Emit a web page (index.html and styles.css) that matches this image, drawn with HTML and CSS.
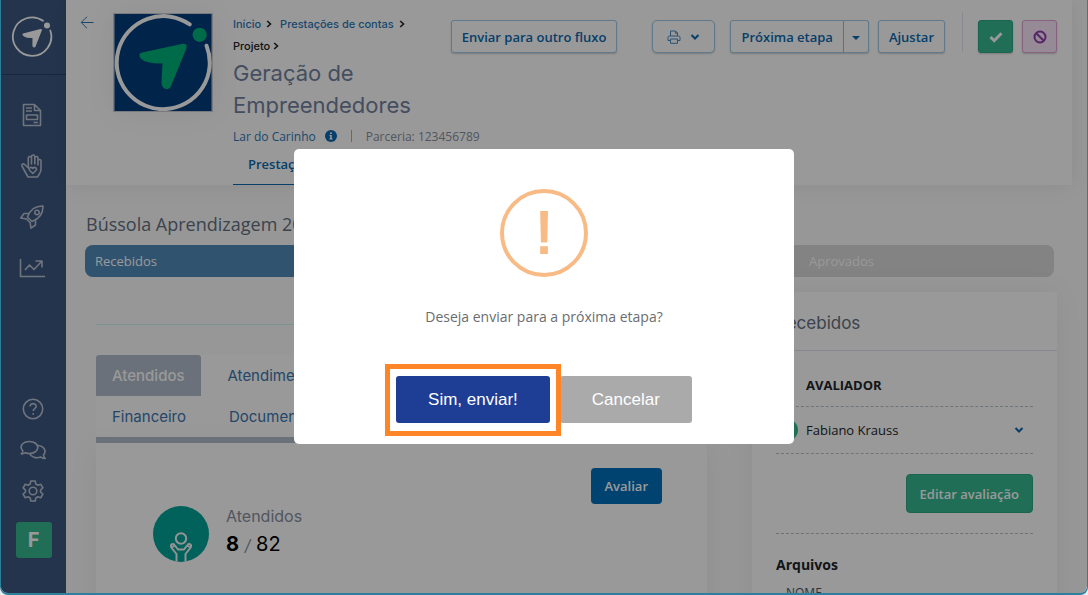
FILE: index.html
```
<!DOCTYPE html>
<html lang="pt-br">
<head>
	<meta charset="utf-8">
	<meta name="viewport" content="width=device-width, initial-scale=1">
	<title>Prestações de contas</title>
	<link rel="stylesheet" href="styles.css">
</head>
<body>
<div class="window">

	<aside class="sidebar">
		<a href="#" class="brand" aria-label="Início">
			<svg width="42" height="42" viewBox="0 0 42 42">
				<path d="M32 4.800A19.200 19.200 0 1 0 39.300 14.500" fill="none" stroke="#fff" stroke-width="1.800" stroke-linecap="round"/>
				<circle cx="36" cy="9.500" r="3" fill="#fff"/>
				<path d="M12 17.500 29.500 13Q31.500 12.600 30.800 14.500L24.500 30.500Q23.800 32 22.400 31.300Q21.300 30.700 21.400 29L21.500 22Q16 22.300 13 20.500Q10.500 18.500 12 17.500Z" fill="#fff"/>
			</svg>
		</a>
		<nav class="menu">
			<a href="#" aria-label="Documentos">
				<svg width="24" height="24" viewBox="0 0 24 24"><path d="M3.500 1.500h11l6 6v15h-17zM14.500 1.500v6h6M6 5h6M6 8h6M6.500 12h11v4.500h-11zM13.500 19.500h4.500"/></svg>
			</a>
			<a href="#" aria-label="Doações">
				<svg width="24" height="24" viewBox="0 0 24 24"><path d="M8 23h9.500c1-2 3.500-4 3.500-8V7c0-2-3-2-3 0v4-7c0-2-3.200-2-3.200 0v6V2.500c0-2-3.300-2-3.300 0V10 4c0-2-3.200-2-3.200 0v10l-3.600-3.500C3 9 1 10.500 2.200 12.500z"/><path d="M12.800 19.500l-3.300-3.200c-1.500-2.300 1.500-4 3.300-1.800 1.800-2.200 4.800-.5 3.300 1.800z"/></svg>
			</a>
			<a href="#" aria-label="Projetos">
				<svg width="24" height="24" viewBox="0 0 24 24"><path d="M7.500 12C10 5 15 .8 23 1c.2 8-4 13-11 15.500zM9 8.500H4L.8 13l5.700 1M15.500 15v5L11 23.200l-1-5.700M6 13.500l4.500 4.500"/><circle cx="17" cy="7.500" r="2.200"/></svg>
			</a>
			<a href="#" aria-label="Relatórios">
				<svg width="26" height="24" viewBox="0 0 26 24"><path d="M1.500 3v17.500H26M6 14l4.500-5 4.500 4.500L22.500 5.500M16.500 5h6.500v6.500"/></svg>
			</a>
		</nav>
		<div class="menu menu-bottom">
			<a href="#" aria-label="Ajuda">
				<svg width="24" height="24" viewBox="0 0 24 24"><circle cx="12" cy="12" r="9.700"/><path d="M9 9.500c0-4 6.300-3.700 6.200-.2 0 2.300-3 2.300-3 4.700"/><path d="M12.200 16v1.800"/></svg>
			</a>
			<a href="#" aria-label="Mensagens">
				<svg width="26" height="24" viewBox="0 0 26 24"><path d="M9.500 3.500c5 0 8.300 2.700 8.300 6s-3.600 6-8.300 6c-1.500 0-2.800-.2-4-.8-1.200.8-2.700 1.300-4.200 1.300 1-1 1.500-2 1.600-3C-1.500 8.500 3 3.500 9.500 3.500z"/><path d="M18 7.500c6.500.5 8.800 6 5.400 9.500.2 1.300.8 2.300 1.800 3.500-1.700 0-3.200-.5-4.400-1.400-4.800 1.600-9.800 0-11-3.400"/></svg>
			</a>
			<a href="#" aria-label="Configurações">
				<svg width="24" height="24" viewBox="0 0 24 24"><path d="M9.800 2h4.400l.6 3 2.100 1.200 2.800-1 2.200 3.800-2.300 1.900v2.200l2.300 1.900-2.200 3.800-2.800-1-2.100 1.200-.6 3H9.800l-.6-3-2.100-1.200-2.800 1-2.200-3.800 2.300-1.900v-2.200L2.100 9l2.200-3.800 2.800 1L9.200 5z"/><circle cx="12" cy="12" r="3.800"/></svg>
			</a>
			<a href="#" class="user">F</a>
		</div>
	</aside>

	<main class="page">

		<header class="header">
			<a href="#" class="back" aria-label="Voltar">
				<svg width="14" height="14" viewBox="0 0 14 14"><path d="M13.500 7.500H1.500M7 1.700 1.200 7.500 7 13.300" fill="none" stroke="#2b79b8"/></svg>
			</a>
			<div class="picture">
				<svg viewBox="0 0 98 98">
					<rect width="98" height="98" fill="#003d7c"/>
					<path d="M76 10.500A47 47 0 1 0 93 32" fill="none" stroke="#fff" stroke-width="4" stroke-linecap="round"/>
					<circle cx="86" cy="21" r="7.200" fill="#00b27a"/>
					<path d="M28 39 69 30Q74 29.500 72.500 35L57 73Q55.500 77 51 75.500Q47.500 74 47.500 69L48.500 50Q31 50 26.500 45Q23 40 28 39Z" fill="#00b27a"/>
				</svg>
			</div>
			<div class="header-body">
				<div class="header-top">
					<div class="heading">
						<nav class="breadcrumb">
							<a href="#">Início</a><svg class="chev" width="6" height="8" viewBox="0 0 6 8"><path d="M1.200 1 4.500 4 1.200 7"/></svg>
							<a href="#">Prestações de contas</a><svg class="chev" width="6" height="8" viewBox="0 0 6 8"><path d="M1.200 1 4.500 4 1.200 7"/></svg>
							<span>Projeto</span><svg class="chev near" width="6" height="8" viewBox="0 0 6 8"><path d="M1.200 1 4.500 4 1.200 7"/></svg>
						</nav>
						<h1>Geração de Empreendedores</h1>
					</div>
					<div class="actions">
						<button type="button" class="btn flow">Enviar para outro fluxo</button>
						<button type="button" class="btn print" aria-label="Imprimir">
							<svg width="14" height="14" viewBox="0 0 14 14"><path d="M3.500 6V1h5l2 2v3M8.500 1v2.200h2M3.200 10.500H1V7.500Q1 6 2.500 6h9Q13 6 13 7.500v3h-2.200M3.500 9h7v4.300h-7z" fill="none" stroke="#4a8abf"/></svg>
							<svg width="10" height="8" viewBox="0 0 10 8"><path d="M1.500 2 5 5.500 8.500 2" fill="none" stroke="#0b69b0" stroke-width="2"/></svg>
						</button>
						<div class="split">
							<button type="button" class="btn">Próxima etapa</button>
							<button type="button" class="btn caret" aria-label="Mais etapas"><svg width="8" height="4" viewBox="0 0 8 4"><path d="M0 0h8L4 4z" fill="#0b69b0"/></svg></button>
						</div>
						<button type="button" class="btn">Ajustar</button>
						<div class="status">
							<button type="button" class="btn approve" aria-label="Aprovar"><svg width="14" height="12" viewBox="0 0 14 12"><path d="M1.500 6 5.200 9.700 12.500 2.200" fill="none" stroke="#fff" stroke-width="3"/></svg></button>
							<button type="button" class="btn refuse" aria-label="Reprovar"><svg width="14" height="14" viewBox="0 0 14 14"><circle cx="7" cy="7" r="5.500"/><path d="M3 3l8 8"/></svg></button>
						</div>
					</div>
				</div>
				<div class="meta">
					<a href="#">Lar do Carinho</a>
					<svg width="12" height="12" viewBox="0 0 12 12"><circle cx="6" cy="6" r="6" fill="#0b69b0"/><path d="M5 2.500h2v1.600H5zM4.500 5h2.300v3.300h.7v1.200h-3V8.300h.7V6.200h-.7z" fill="#fff"/></svg>
					<span class="bar"></span>
					<span>Parceria: 123456789</span>
				</div>
				<nav class="tabs"><a href="#">Prestação de contas</a></nav>
			</div>
		</header>

		<h2 class="title">Bússola Aprendizagem 2022</h2>

		<div class="steps">
			<div class="current">Recebidos</div>
			<div></div>
			<div></div>
			<div>Aprovados</div>
		</div>

		<div class="columns">
			<section class="report">
				<nav class="subtabs">
					<a href="#" class="active">Atendidos</a>
					<a href="#">Atendimentos</a>
				</nav>
				<nav class="subtabs">
					<a href="#">Financeiro</a>
					<a href="#">Documentos</a>
				</nav>
				<div class="report-body">
					<button type="button" class="primary">Avaliar</button>
					<div class="stat">
						<svg width="56" height="56" viewBox="0 0 56 56">
							<circle cx="28" cy="28" r="28" fill="#00a396"/>
							<g fill="none" stroke="#f4f6f6" stroke-width="2" stroke-linejoin="round">
								<circle cx="28" cy="32.500" r="5.200"/>
								<path d="M23.500 55.500V48L18.300 41.500Q17.300 39 19 38.200Q20.500 37.600 21.500 39L25 43.500H31L34.500 39Q35.500 37.600 37 38.200Q38.700 39 37.700 41.500L32.500 48V55.500M18.500 41.500 22 39.500M37.500 41.500 34 39.500"/>
							</g>
						</svg>
						<div>
							<div class="label">Atendidos</div>
							<div class="value"><b>8</b> <i>/</i> 82</div>
						</div>
					</div>
				</div>
			</section>

			<section class="review">
				<h3>Recebidos</h3>
				<div class="review-body">
					<div class="th">AVALIADOR</div>
					<div class="evaluator">
						<span class="avatar"></span>
						<span class="name">Fabiano Krauss</span>
						<svg width="10" height="8" viewBox="0 0 10 8"><path d="M1.500 2 5 5.500 8.500 2" fill="none" stroke="#0b69b0" stroke-width="2"/></svg>
					</div>
					<div class="edit"><button type="button" class="success">Editar avaliação</button></div>
					<h4>Arquivos</h4>
					<div class="file-head">NOME</div>
				</div>
			</section>
		</div>
	</main>
</div>

<div class="overlay">
	<div class="modal" role="dialog" aria-modal="true" aria-labelledby="question">
		<div class="warning">!</div>
		<p id="question">Deseja enviar para a próxima etapa?</p>
		<div class="modal-actions">
			<div class="highlight"><button type="button" class="confirm">Sim, enviar!</button></div>
			<button type="button" class="cancel">Cancelar</button>
		</div>
	</div>
</div>
</body>
</html>
```

FILE: styles.css
```
* {
	box-sizing: border-box;
}
body {
	margin: 0;
	background: #e8eef0;
	font-family: "Open Sans", "Noto Sans", sans-serif;
	font-size: 13px;
	color: #212529;
}
a {
	color: #2b79b8;
	text-decoration: none;
}
button {
	font-family: inherit;
	cursor: pointer;
}
h1, h2, h3, h4, p {
	margin: 0;
	font-weight: normal;
}

.window {
	display: flex;
	height: 100vh;
	border: 1px solid #2d7f9c;
	border-top: 0;
	border-bottom-width: 2px;
	border-radius: 0 0 8px 8px;
	overflow: hidden;
	background: #fcfcfd;
}

/* sidebar */
.sidebar {
	display: flex;
	flex-direction: column;
	flex: none;
	width: 65px;
	padding-bottom: 35px;
	background: #3c5880;
}
.brand {
	display: flex;
	align-items: center;
	justify-content: center;
	height: 75px;
	padding-right: 3px;
	border-bottom: 1px solid #2b4064;
}
.menu {
	display: flex;
	flex-direction: column;
	align-items: center;
	gap: 27px;
	padding-top: 28px;
	padding-right: 3px;
}
.menu a {
	display: block;
	height: 24px;
}
.menu svg {
	display: block;
	fill: none;
	stroke: #b9c2d0;
	stroke-width: 1.6;
	stroke-linejoin: round;
}
.menu-bottom {
	margin-top: auto;
	padding-top: 0;
	padding-right: 0;
	gap: 17px;
}
.menu-bottom svg {
	margin-right: 1px;
}
.menu .user {
	width: 36px;
	height: 36px;
	margin-top: 2px;
	border-radius: 3px;
	background: #37b78f;
	color: #fff;
	font: bold 20px/36px "Inter", sans-serif;
	text-align: center;
}

/* header */
.page {
	flex: 1;
	min-width: 0;
}
.header {
	display: flex;
	align-items: flex-start;
	height: 185px;
	margin-right: 15px;
	padding: 13px 15px 0 14px;
	background: #fff;
	box-shadow: 0 0 20px rgba(0, 0, 0, .08);
}
.back {
	margin-top: 2px;
	width: 33px;
}
.picture {
	flex: none;
	width: 100px;
	height: 99px;
	padding: 1px;
	background: #c8ccd0;
	box-shadow: 0 0 30px rgba(0, 0, 0, .06);
}
.picture svg {
	display: block;
	width: 98px;
	height: 97px;
}
.header-body {
	flex: 1;
	min-width: 0;
	margin-left: 20px;
}
.header-top {
	display: flex;
	justify-content: space-between;
}
.heading {
	width: 190px;
}
.breadcrumb {
	font: 500 11px/22px "Inter", sans-serif;
}
.breadcrumb span {
	color: #222;
}
.chev {
	margin: 0 5px;
	fill: none;
	stroke: #222;
	stroke-width: 1.6;
}
.chev.near {
	margin-left: 3px;
}
h1 {
	font: 400 22px/32px "Inter", sans-serif;
	color: #7283a0;
}
.actions {
	display: flex;
	padding-top: 7px;
}
.btn {
	height: 33px;
	padding: 0 10px;
	border: 1px solid #a0cbe8;
	border-radius: 3px;
	background: #fff;
	box-shadow: 0 1px 2px rgba(0, 0, 0, .2);
	color: #0b69b0;
	font-size: 13px;
	font-weight: 600;
	white-space: nowrap;
}
.flow {
	margin-right: 35px;
}
.print {
	display: flex;
	align-items: center;
	gap: 9px;
	margin-right: 15px;
	padding: 0 14px;
	border-radius: 5px;
}
.split {
	display: flex;
	margin-right: 9px;
}
.split .btn:first-child {
	border-radius: 3px 0 0 3px;
}
.split .caret {
	width: 25px;
	padding: 0;
	border-left: 0;
	border-radius: 0 3px 3px 0;
}
.caret svg {
	vertical-align: middle;
}
.status {
	display: flex;
	gap: 9px;
	height: 40px;
	margin: -8px 0 0 17px;
	padding: 8px 0 0 15px;
	border-left: 1px solid #e4e6f0;
}
.status .btn {
	display: flex;
	align-items: center;
	justify-content: center;
	width: 35px;
	flex: none;
	padding: 0;
}
.approve {
	background: #37b78f;
	border-color: #2fa781;
}
.refuse {
	background: #f9e6fa;
	border-color: #e2a3d2;
	fill: none;
	stroke: #8e3fae;
	stroke-width: 2;
}
.meta {
	display: flex;
	align-items: center;
	gap: 9px;
	height: 30px;
	color: #8890a0;
	font-size: 12px;
}
.bar {
	width: 1px;
	height: 12px;
	margin: 0 5px;
	background: #a8adba;
}
.tabs a {
	display: inline-block;
	height: 34px;
	padding: 0 15px;
	border-bottom: 1px solid #0b69b0;
	color: #0b69b0;
	font-weight: 600;
	line-height: 26px;
}

/* steps */
.title {
	margin: 27px 20px 8px;
	color: #64707f;
	font-size: 18px;
	line-height: 25px;
}
.steps {
	display: grid;
	grid-template-columns: 1fr 1fr 1fr 255px;
	margin: 0 33px 0 19px;
	border-radius: 8px;
	overflow: hidden;
	background: #dadada;
	color: #fff;
	line-height: 32px;
}
.steps div {
	padding: 0 10px;
}
.steps .current {
	background: #508bbb;
}

/* content */
.columns {
	display: flex;
	align-items: flex-start;
	gap: 45px;
	margin: 15px 30px 0 30px;
}
.report {
	flex: 1;
	min-width: 0;
	margin-top: 32px;
	padding-top: 30px;
	border-top: 1px solid #cbf6f0;
}
.subtabs {
	display: flex;
	gap: 11px;
	background: #fff;
	font: 400 15px/41px "Inter", sans-serif;
}
.subtabs a {
	padding: 0 16px;
	color: #3b76b0;
}
.subtabs .active {
	border-radius: 3px 3px 0 0;
	background: #b1bccd;
	color: #fff;
	font-weight: 500;
}
.report-body {
	display: flex;
	flex-direction: column;
	height: 250px;
	padding: 25px 45px 0 57px;
	border-top: 6px solid #b1bccd;
	background: #fff;
	box-shadow: 0 10px 30px rgba(0, 0, 0, .06);
}
.primary {
	align-self: flex-end;
	height: 36px;
	padding: 0 14px;
	border: 0;
	border-radius: 4px;
	background: #0070bb;
	color: #fff;
	font-size: 13px;
	font-weight: 600;
}
.stat {
	display: flex;
	gap: 17px;
	margin-top: 2px;
}
.label {
	color: #8890a0;
	font: 16px/20px "Inter", sans-serif;
}
.value {
	color: #000;
	font: 20px/36px "Inter", sans-serif;
}
.value i {
	color: #8890a0;
	font-size: 16px;
}

/* review panel */
.review {
	flex: none;
	width: 305px;
	height: 340px;
	border-radius: 3px;
	background: #fff;
	box-shadow: 0 0 30px rgba(0, 0, 0, .06);
}
h3 {
	height: 59px;
	padding: 0 24px;
	border-bottom: 1px solid #dfe6ee;
	color: #64707f;
	font: 400 17px/62px "Inter", sans-serif;
}
.review-body {
	padding: 14px 24px 0;
}
.th {
	padding-left: 30px;
	border-bottom: 1px dashed #b8c4cc;
	font-weight: bold;
	line-height: 41px;
}
.evaluator {
	display: flex;
	align-items: center;
	height: 47px;
	padding-right: 9px;
	border-bottom: 1px dashed #b8c4cc;
}
.avatar {
	width: 22px;
	height: 22px;
	margin-right: 8px;
	border-radius: 50%;
	background: #37b78f;
}
.name {
	flex: 1;
}
.edit {
	padding: 20px 0;
	border-bottom: 1px dashed #b8bcc0;
	text-align: right;
}
.success {
	display: inline-block;
	height: 39px;
	padding: 0 13px;
	border: 1px solid #2fa781;
	border-radius: 4px;
	background: #37b78f;
	color: #fff;
	font-size: 13px;
	font-weight: 600;
	vertical-align: top;
}
h4 {
	padding-top: 20px;
	font-size: 14px;
	font-weight: bold;
	line-height: 22px;
}
.file-head {
	padding: 8px 10px;
	color: #4a5568;
	font-size: 12px;
}

/* dialog */
.overlay {
	position: fixed;
	inset: 0 1px 2px 1px;
	display: flex;
	align-items: center;
	justify-content: center;
	border-radius: 0 0 7px 7px;
	background: rgba(0, 0, 0, .4);
}
.modal {
	width: 500px;
	max-width: 100%;
	padding: 40px 20px 21px;
	border-radius: 5px;
	background: #fff;
	text-align: center;
}
.warning {
	width: 88px;
	height: 88px;
	margin: 0 auto 30px;
	border: 4px solid #f8bb86;
	border-radius: 50%;
	color: #f8bb86;
	font: 60px/80px "Liberation Sans", Arial, sans-serif;
	-webkit-text-stroke: 2px #f8bb86;
}
.modal p {
	color: #6a6d70;
	font-size: 14px;
	line-height: 20px;
}
.modal-actions {
	display: flex;
	justify-content: center;
	gap: 10px;
	margin-top: 49px;
}
.modal button {
	display: block;
	height: 47px;
	padding: 0 32px;
	border: 0;
	border-radius: 3px;
	color: #fff;
	font: 17px "Liberation Sans", Arial, sans-serif;
}
.modal .confirm {
	background: #1d3e94;
}
.modal .cancel {
	background: #aaa;
}
.highlight {
	position: relative;
}
.highlight::after {
	content: "";
	position: absolute;
	inset: -12px -11px -13px -11px;
	border: 5px solid #ff8527;
	pointer-events: none;
}
```
